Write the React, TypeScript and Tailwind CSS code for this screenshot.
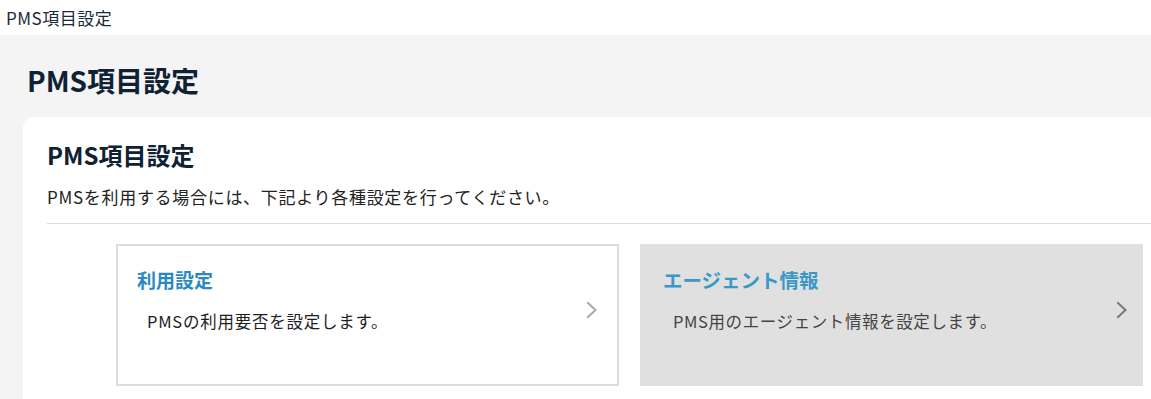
import React from "react";

const font = { fontFamily: '"Noto Sans CJK JP", "Noto Sans", sans-serif' };

function Chevron({ color }: { color: string }) {
  return (
    <svg width="12" height="18" viewBox="0 0 12 18" fill="none">
      <path d="M2 2 L9.5 9 L2 16" stroke={color} strokeWidth="2" strokeLinecap="square" />
    </svg>
  );
}

export default function App() {
  return (
    <div className="w-[1151px] h-[399px] overflow-hidden bg-white" style={font}>
      <div className="h-[35px] flex items-center px-[6px] text-[17px] tracking-[0.5px] text-[#1a2a38]">PMS項目設定</div>
      <div className="bg-[#f4f4f4] h-[364px] overflow-hidden">
        <h1 className="pl-[27px] pt-[25px] h-[82px] text-[28px] font-bold leading-[40px] text-[#0f2233]">PMS項目設定</h1>
        <div className="ml-[23px] bg-white rounded-tl-[10px] h-[300px] pl-[24px]">
          <h2 className="pt-[21px] text-[24px] font-bold leading-[34px] text-[#0f2233]">PMS項目設定</h2>
          <p className="mt-[12px] text-[17px] tracking-[0.7px] leading-[26px] text-[#222]">PMSを利用する場合には、下記より各種設定を行ってください。</p>
          <div className="mt-[13px] h-px bg-[#dcdcdc]" />
          <div className="mt-[20px] ml-[69px] flex gap-[21px]">
            <div className="w-[503px] h-[142px] border-2 border-[#dddddd] bg-white flex items-center pr-[19px]">
              <div className="flex-1 pl-[19px] self-start">
                <div className="mt-[20px] text-[19px] font-bold leading-[28px] text-[#2a88c0]">利用設定</div>
                <div className="mt-[15px] pl-[10px] text-[16.5px] tracking-[0.75px] leading-[24px] text-[#1e1e1e]">PMSの利用要否を設定します。</div>
              </div>
              <div className="-mt-[10px]"><Chevron color="#a8a8a8" /></div>
            </div>
            <div className="w-[503px] h-[142px] border-2 border-[#e0e0e0] bg-[#e0e0e0] flex items-center pr-[13px]">
              <div className="flex-1 pl-[21px] self-start">
                <div className="mt-[20px] text-[19.5px] font-bold leading-[28px] text-[#3a98c8]">エージェント情報</div>
                <div className="mt-[15px] pl-[10px] text-[16.5px] tracking-[0.6px] leading-[24px] text-[#444]">PMS用のエージェント情報を設定します。</div>
              </div>
              <div className="-mt-[10px]"><Chevron color="#777777" /></div>
            </div>
          </div>
        </div>
      </div>
    </div>
  );
}
